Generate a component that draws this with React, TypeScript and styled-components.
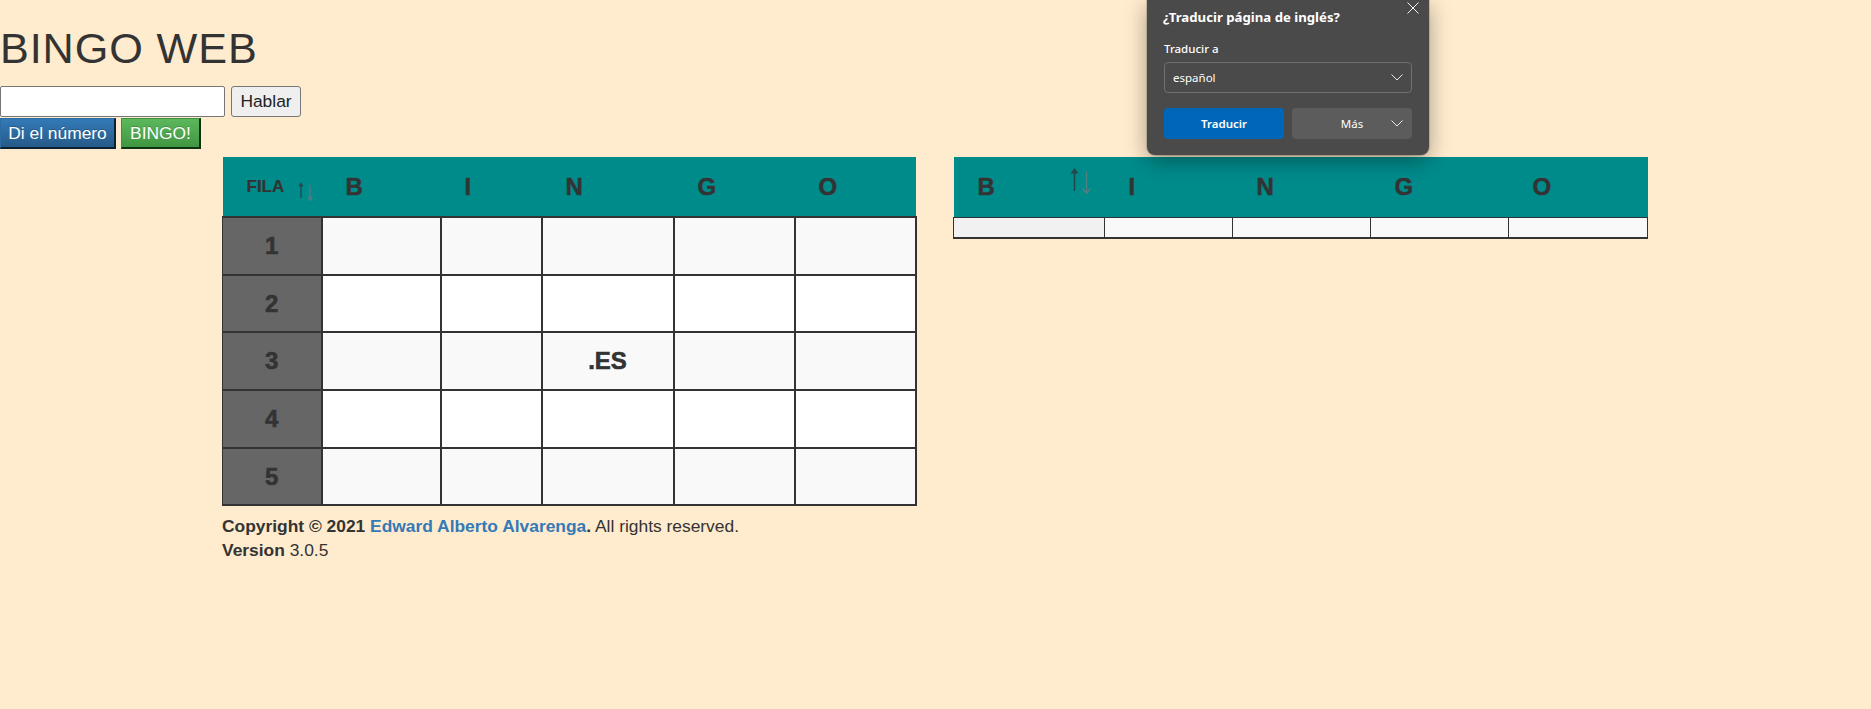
import React from "react";
import styled, { createGlobalStyle } from "styled-components";

const GlobalStyle = createGlobalStyle`
  html, body { margin: 0; padding: 0; background: #ffebcd; }
  body {
    font-family: "Liberation Sans", Arial, Helvetica, sans-serif;
    font-size: 17.4px;
    line-height: 24px;
    color: #333;
    min-height: 100vh;
  }
  * { box-sizing: border-box; }
`;

const Page = styled.div`
  position: relative;
  min-height: 709px;
  overflow: hidden;
`;

const Title = styled.h1`
  font-size: 43.2px;
  font-weight: 400;
  line-height: 1.1;
  letter-spacing: 0.9px;
  margin: 25px 0 13.5px;
`;

const ControlRow = styled.div<{ $gap: number; $mb?: number }>`
  display: flex;
  gap: ${(p) => p.$gap}px;
  height: 31px;
  margin-bottom: ${(p) => p.$mb ?? 0}px;
`;

const TextInput = styled.input`
  width: 225px;
  height: 31px;
  border: 1px solid #767676;
  border-radius: 2px;
  background: #fff;
  padding: 0 4px;
  font: inherit;
`;

const PlainButton = styled.button`
  height: 31px;
  width: 70px;
  padding: 0;
  background: #efefef;
  border: 1px solid #767676;
  border-radius: 3px;
  font-family: inherit;
  font-size: 17.4px;
  color: #222;
`;

const ColorButton = styled.button<{ $tone: "primary" | "success"; $w: number }>`
  height: 31px;
  width: ${(p) => p.$w}px;
  padding: 0;
  display: flex;
  align-items: center;
  justify-content: center;
  font-family: inherit;
  font-size: 17.4px;
  color: #fff;
  text-shadow: 0 -1px 0 rgba(0, 0, 0, 0.2);
  border-style: solid;
  border-width: 1px 2px 2px 1px;
  border-radius: 0;
  background: ${(p) =>
    p.$tone === "primary"
      ? "linear-gradient(to bottom, #337ab7 0, #265a88 100%)"
      : "linear-gradient(to bottom, #5cb85c 0, #419641 100%)"};
  border-color: ${(p) =>
    p.$tone === "primary"
      ? "#2d6ca2 #0c1f33 #0c1f33 #2d6ca2"
      : "#3e8f3e #0e3310 #0e3310 #3e8f3e"};
`;

const TablesRow = styled.div`
  display: flex;
  align-items: flex-start;
  gap: 38px;
  padding-left: 222px;
  margin-top: 8px;
`;

const Column = styled.div<{ $w: number }>`
  width: ${(p) => p.$w}px;
  display: flex;
  flex-direction: column;
`;

const Table = styled.table<{ $w: number }>`
  width: ${(p) => p.$w}px;
  border-collapse: collapse;
  table-layout: fixed;
`;

const HeadCell = styled.th<{ $small?: boolean; $w: number }>`
  position: relative;
  width: ${(p) => p.$w}px;
  height: 60px;
  padding: 0 24px;
  background: #008b8b;
  text-align: left;
  vertical-align: middle;
  font-size: ${(p) => (p.$small ? 17 : 24)}px;
  font-weight: 700;
  color: #333;
  border: none;
  -webkit-text-stroke: ${(p) => (p.$small ? 0.2 : 0.5)}px #333;
`;

const BodyCell = styled.td<{ $bg: string }>`
  height: 57.7px;
  padding: 0;
  border: 2px solid #333;
  background: ${(p) => p.$bg};
  text-align: center;
  vertical-align: middle;
  font-size: 24px;
  font-weight: 700;
  color: #333;
  -webkit-text-stroke: 0.6px #333;
  &:first-child { border-left-width: 1px; }
`;

const SmallCell = styled.td<{ $bg: string }>`
  height: 21px;
  padding: 0;
  border: 1px solid #333;
  border-bottom-width: 2px;
  background: ${(p) => p.$bg};
`;

const SortMark = styled.span<{ $left: number; $top: number }>`
  position: absolute;
  left: ${(p) => p.$left}px;
  top: ${(p) => p.$top}px;
  display: block;
  line-height: 0;
`;

const Footer = styled.div`
  margin-top: 8px;
  line-height: 24px;
`;

const Link = styled.a`
  color: #337ab7;
  font-weight: 700;
  text-decoration: none;
`;

const Popup = styled.div`
  position: absolute;
  left: 1147px;
  top: 0;
  width: 282px;
  height: 155px;
  padding: 8px 17px 0 16px;
  background: #4a4a4a;
  border-radius: 0 0 8px 8px;
  box-shadow: 0 6px 22px rgba(0, 0, 0, 0.35), 0 0 0 1px rgba(0, 0, 0, 0.15);
  font-family: "Segoe UI", "Noto Sans", "Open Sans", sans-serif;
  color: #fff;
`;

const PopupTitle = styled.div`
  font-size: 13.2px;
  font-weight: 700;
  line-height: 18px;
`;

const CloseMark = styled.span`
  position: absolute;
  right: 10px;
  top: 2px;
  line-height: 0;
`;

const PopupLabel = styled.div`
  margin-top: 15px;
  padding-left: 1px;
  font-size: 11.5px;
  font-weight: 500;
  line-height: 16px;
`;

const SelectBox = styled.div`
  margin-top: 5px;
  margin-left: 1px;
  height: 31px;
  border: 1px solid #6f6f6f;
  border-radius: 4px;
  padding: 0 8px 0 8px;
  display: flex;
  align-items: center;
  justify-content: space-between;
  font-size: 11.5px;
`;

const PopupButtons = styled.div`
  margin-top: 15px;
  margin-left: 1px;
  display: grid;
  grid-template-columns: 120px 120px;
  gap: 8px;
`;

const PopupButton = styled.div<{ $primary?: boolean }>`
  position: relative;
  height: 31px;
  border-radius: 4px;
  background: ${(p) => (p.$primary ? "#0067b8" : "#5c5c5c")};
  display: flex;
  align-items: center;
  justify-content: center;
  font-size: 11.5px;
  font-weight: ${(p) => (p.$primary ? 600 : 400)};
`;

const ButtonChevron = styled.span`
  position: absolute;
  right: 9px;
  top: 12px;
  line-height: 0;
`;

const Chevron = () => (
  <svg width="12" height="7" viewBox="0 0 12 7">
    <polyline points="0.5,0.5 6,6 11.5,0.5" fill="none" stroke="#e8e8e8" strokeWidth="1" />
  </svg>
);

const SortIcon = ({ big }: { big?: boolean }) => {
  const w = big ? 21 : 14;
  const h = big ? 26 : 19;
  const ux = big ? 4.5 : 2;
  const dx = big ? 16.5 : 11;
  const uh = big ? 23 : 16;
  const dTop = big ? 3.5 : 3;
  const hw = big ? 4 : 2.5;
  const hh = big ? 5 : 4;
  const down = "#4f7f82";
  const up = "#26464d";
  return (
    <svg width={w} height={h} viewBox={`0 0 ${w} ${h}`}>
      <line x1={ux} y1={hh - 1} x2={ux} y2={uh} stroke={up} strokeWidth={big ? 1.6 : 1.3} />
      <polygon points={`${ux - hw},${hh + 0.5} ${ux},0 ${ux + hw},${hh + 0.5}`} fill={up} />
      <line x1={dx} y1={dTop} x2={dx} y2={h - 1} stroke={down} strokeWidth={big ? 1.5 : 1.3} />
      <polyline
        points={`${dx - hw},${h - hh - 0.5} ${dx},${h - 0.5} ${dx + hw},${h - hh - 0.5}`}
        fill="none"
        stroke={down}
        strokeWidth={big ? 1.5 : 1.3}
      />
    </svg>
  );
};

const leftCols = [
  { label: "FILA", w: 99, small: true },
  { label: "B", w: 119 },
  { label: "I", w: 101 },
  { label: "N", w: 132 },
  { label: "G", w: 121 },
  { label: "O", w: 121 },
];

const rightCols = [
  { label: "B", w: 151 },
  { label: "I", w: 128 },
  { label: "N", w: 138 },
  { label: "G", w: 138 },
  { label: "O", w: 139 },
];

const rows = [1, 2, 3, 4, 5];

export default function App() {
  return (
    <Page>
      <GlobalStyle />
      <Title>BINGO WEB</Title>
      <ControlRow $gap={6} $mb={1}>
        <TextInput type="text" />
        <PlainButton>Hablar</PlainButton>
      </ControlRow>
      <ControlRow $gap={5}>
        <ColorButton $tone="primary" $w={116}>Di el número</ColorButton>
        <ColorButton $tone="success" $w={80}>BINGO!</ColorButton>
      </ControlRow>

      <TablesRow>
        <Column $w={693}>
          <Table $w={693}>
            <thead>
              <tr>
                {leftCols.map((c, i) => (
                  <HeadCell key={i} $w={c.w} $small={c.small}>
                    {c.label}
                    {i === 0 && (
                      <SortMark $left={76} $top={25}>
                        <SortIcon />
                      </SortMark>
                    )}
                  </HeadCell>
                ))}
              </tr>
            </thead>
            <tbody>
              {rows.map((r) => (
                <tr key={r}>
                  <BodyCell $bg="#666">{r}</BodyCell>
                  {[0, 1, 2, 3, 4].map((c) => (
                    <BodyCell key={c} $bg={r % 2 === 1 ? "#f9f9f9" : "#ffffff"}>
                      {r === 3 && c === 2 ? ".ES" : ""}
                    </BodyCell>
                  ))}
                </tr>
              ))}
            </tbody>
          </Table>
          <Footer>
            <div>
              <strong>Copyright © 2021 </strong>
              <Link href="#">Edward Alberto Alvarenga</Link>
              <strong>.</strong> All rights reserved.
            </div>
            <div>
              <strong>Version</strong> 3.0.5
            </div>
          </Footer>
        </Column>

        <Column $w={694}>
          <Table $w={694}>
            <thead>
              <tr>
                {rightCols.map((c, i) => (
                  <HeadCell key={i} $w={c.w}>
                    {c.label}
                    {i === 0 && (
                      <SortMark $left={116} $top={11}>
                        <SortIcon big />
                      </SortMark>
                    )}
                  </HeadCell>
                ))}
              </tr>
            </thead>
            <tbody>
              <tr>
                {rightCols.map((c, i) => (
                  <SmallCell key={i} $bg={i === 0 ? "#f1f1f1" : "#f9f9f9"} />
                ))}
              </tr>
            </tbody>
          </Table>
        </Column>
      </TablesRow>

      <Popup>
        <PopupTitle>¿Traducir página de inglés?</PopupTitle>
        <CloseMark>
          <svg width="12" height="12" viewBox="0 0 12 12">
            <path d="M0.5 0.5 L11.5 11.5 M11.5 0.5 L0.5 11.5" stroke="#f0f0f0" strokeWidth="1" />
          </svg>
        </CloseMark>
        <PopupLabel>Traducir a</PopupLabel>
        <SelectBox>
          <span>español</span>
          <Chevron />
        </SelectBox>
        <PopupButtons>
          <PopupButton $primary>Traducir</PopupButton>
          <PopupButton>
            Más
            <ButtonChevron>
              <Chevron />
            </ButtonChevron>
          </PopupButton>
        </PopupButtons>
      </Popup>
    </Page>
  );
}
